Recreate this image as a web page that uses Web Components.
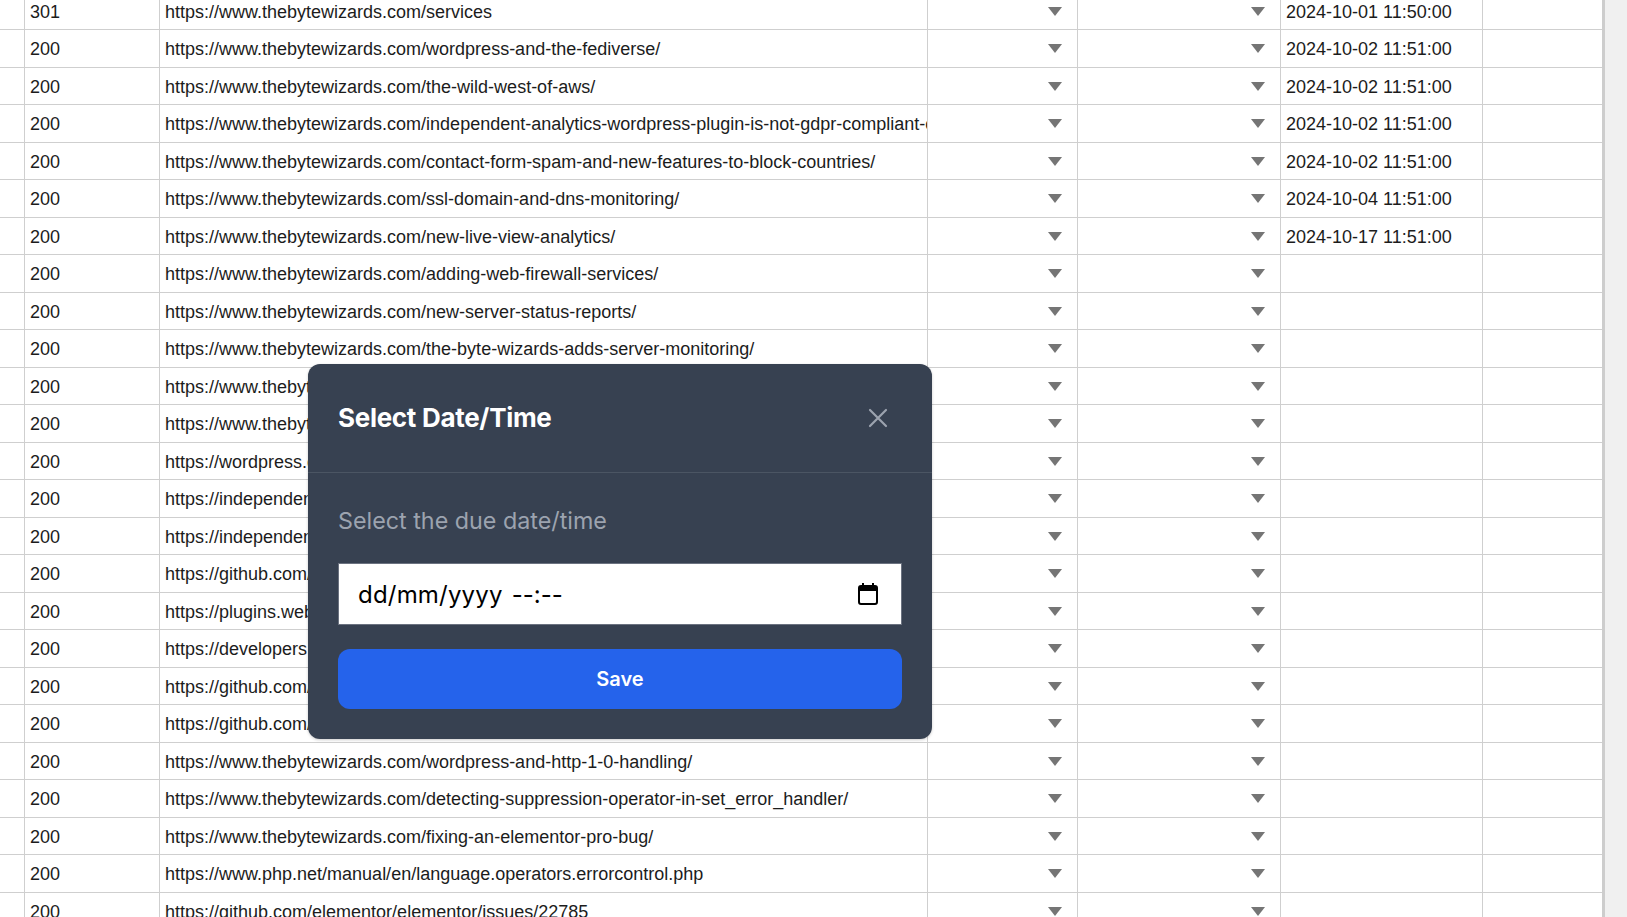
<!DOCTYPE html>
<html lang="en">
<head>
<meta charset="utf-8">
<title>Select Date/Time</title>
<style>
  html,body{margin:0;padding:0;height:100%;overflow:hidden;background:#fff;}
  body{font-family:"Liberation Sans",Arial,sans-serif;color:#111;}
</style>
</head>
<body>
<sheet-page>
  <sheet-row status="301" url="https://www.thebytewizards.com/services" date="2024-10-01 11:50:00"></sheet-row>
  <sheet-row status="200" url="https://www.thebytewizards.com/wordpress-and-the-fediverse/" date="2024-10-02 11:51:00"></sheet-row>
  <sheet-row status="200" url="https://www.thebytewizards.com/the-wild-west-of-aws/" date="2024-10-02 11:51:00"></sheet-row>
  <sheet-row status="200" url="https://www.thebytewizards.com/independent-analytics-wordpress-plugin-is-not-gdpr-compliant-out-of-the-box/" date="2024-10-02 11:51:00"></sheet-row>
  <sheet-row status="200" url="https://www.thebytewizards.com/contact-form-spam-and-new-features-to-block-countries/" date="2024-10-02 11:51:00"></sheet-row>
  <sheet-row status="200" url="https://www.thebytewizards.com/ssl-domain-and-dns-monitoring/" date="2024-10-04 11:51:00"></sheet-row>
  <sheet-row status="200" url="https://www.thebytewizards.com/new-live-view-analytics/" date="2024-10-17 11:51:00"></sheet-row>
  <sheet-row status="200" url="https://www.thebytewizards.com/adding-web-firewall-services/"></sheet-row>
  <sheet-row status="200" url="https://www.thebytewizards.com/new-server-status-reports/"></sheet-row>
  <sheet-row status="200" url="https://www.thebytewizards.com/the-byte-wizards-adds-server-monitoring/"></sheet-row>
  <sheet-row status="200" url="https://www.thebytewizards.com/"></sheet-row>
  <sheet-row status="200" url="https://www.thebytewizards.com/"></sheet-row>
  <sheet-row status="200" url="https://wordpress.org/"></sheet-row>
  <sheet-row status="200" url="https://independentwp.com/"></sheet-row>
  <sheet-row status="200" url="https://independentwp.com/"></sheet-row>
  <sheet-row status="200" url="https://github.com/"></sheet-row>
  <sheet-row status="200" url="https://plugins.website/"></sheet-row>
  <sheet-row status="200" url="https://developers.com/"></sheet-row>
  <sheet-row status="200" url="https://github.com/"></sheet-row>
  <sheet-row status="200" url="https://github.com/"></sheet-row>
  <sheet-row status="200" url="https://www.thebytewizards.com/wordpress-and-http-1-0-handling/"></sheet-row>
  <sheet-row status="200" url="https://www.thebytewizards.com/detecting-suppression-operator-in-set_error_handler/"></sheet-row>
  <sheet-row status="200" url="https://www.thebytewizards.com/fixing-an-elementor-pro-bug/"></sheet-row>
  <sheet-row status="200" url="https://www.php.net/manual/en/language.operators.errorcontrol.php"></sheet-row>
  <sheet-row status="200" url="https://github.com/elementor/elementor/issues/22785"></sheet-row>
  <date-modal slot="overlay" heading="Select Date/Time" label="Select the due date/time"></date-modal>
</sheet-page>
<script>
// spreadsheet rows, with the date picker dialog lying on top
class SheetPage extends HTMLElement {
  constructor() {
    super();
    this.attachShadow({ mode: "open" });
    this.shadowRoot.innerHTML = `
      <style>
      :host{display:block;position:relative;height:917px;overflow:hidden;background:#f0f0f0;}
      .rows{width:1605px;height:100%;overflow:hidden;background:#fff;box-sizing:border-box;border-right:3px solid #cdcdcd;}
      .inner{margin-top:-7.5px;}
      </style>
      <div class="rows"><div class="inner"><slot></slot></div></div>
      <slot name="overlay"></slot>
    `;
  }
}

class SheetRow extends HTMLElement {
  constructor() {
    super();
    this.attachShadow({ mode: "open" });
  }
  connectedCallback() {
    const arrow = `<svg width="14" height="9" viewBox="0 0 14 9" aria-hidden="true"><polygon points="0,0 14,0 7,9" fill="#757575"/></svg>`;
    this.shadowRoot.innerHTML = `
      <style>
      :host{display:grid;grid-template-columns:25px 135px 768px 150px 203px 202px 1fr;height:37.5px;box-sizing:border-box;border-bottom:1.5px solid #cfcfcf;font:18px/36px "Liberation Sans",Arial,sans-serif;color:#1c1c1c;}
      .c{border-right:1.5px solid #cfcfcf;box-sizing:border-box;padding:1px 5px 0;overflow:hidden;white-space:nowrap;min-width:0;}
      .last{border-right:0;}
      .drop{display:flex;align-items:center;justify-content:flex-end;padding:1px 15.5px 0 0;}
      </style>
      <div class="c"></div>
      <div class="c">${this.getAttribute("status") || ""}</div>
      <div class="c">${this.getAttribute("url") || ""}</div>
      <div class="c drop">${arrow}</div>
      <div class="c drop">${arrow}</div>
      <div class="c">${this.getAttribute("date") || ""}</div>
      <div class="c last"></div>
    `;
  }
}

class DateModal extends HTMLElement {
  constructor() {
    super();
    this.attachShadow({ mode: "open" });
  }
  connectedCallback() {
    this.shadowRoot.innerHTML = `
      <style>
      :host{display:block;position:absolute;left:308px;top:364px;width:624px;height:375px;background:#374151;border-radius:12px;box-shadow:0 1px 3px rgba(0,0,0,.2);font-family:Inter,"Noto Sans",sans-serif;}
      header{display:flex;align-items:center;justify-content:space-between;height:109px;box-sizing:border-box;padding:0 30px 2px;border-bottom:1px solid #4b5563;}
      h3{margin:0;font-size:26px;font-weight:700;color:#fff;letter-spacing:-.3px;}
      .close{display:flex;width:20px;height:20px;margin:2px 14px 0 0;}
      .body{padding:31px 30px 30px;}
      .label{font-size:23.3px;line-height:34px;color:#9ca3af;}
      .field{display:flex;align-items:center;justify-content:space-between;height:62px;margin-top:25px;padding:0 23px 0 19px;box-sizing:border-box;background:#fff;border:1px solid #6b7280;font-size:24px;color:#000;}
      .date{letter-spacing:.2px;}
      .time{margin-left:9px;letter-spacing:0;}
      .field svg{display:block;}
      .save{display:flex;align-items:center;justify-content:center;height:60px;margin-top:24px;background:#2563eb;border-radius:12px;color:#fff;font-size:20px;font-weight:600;}
      </style>
      <header>
        <h3>${this.getAttribute("heading")}</h3>
        <span class="close"><svg width="20" height="20" viewBox="0 0 20 20" aria-hidden="true"><path d="M2 2 18 18M18 2 2 18" stroke="#9ca3af" stroke-width="2.2" stroke-linecap="round" fill="none"/></svg></span>
      </header>
      <div class="body">
        <div class="label">${this.getAttribute("label")}</div>
        <div class="field">
          <span class="date">dd/mm/yyyy<span class="time">--:--</span></span>
          <svg width="20" height="22" viewBox="0 0 20 22" aria-hidden="true"><path d="M3 3h14a2 2 0 0 1 2 2v14a2 2 0 0 1-2 2H3a2 2 0 0 1-2-2V5a2 2 0 0 1 2-2Z" fill="none" stroke="#000" stroke-width="2"/><path d="M1 4h18v4H1zM4 0h2v4H4zM14 0h2v4h-2z" fill="#000"/></svg>
        </div>
        <div class="save">Save</div>
      </div>
    `;
  }
}

customElements.define("sheet-page", SheetPage);
customElements.define("sheet-row", SheetRow);
customElements.define("date-modal", DateModal);
</script>
</body>
</html>
